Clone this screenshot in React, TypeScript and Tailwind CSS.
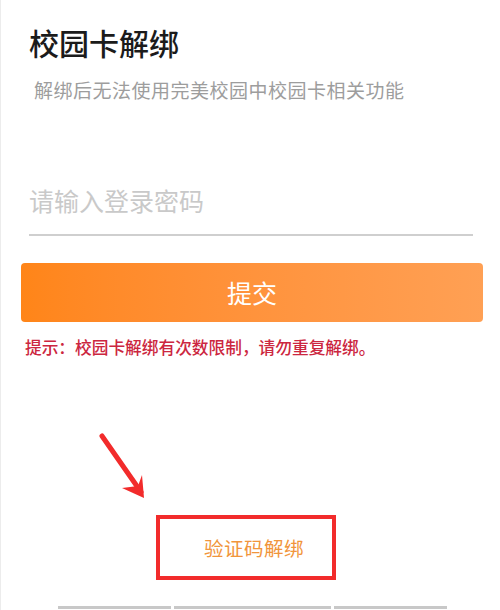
import React from 'react';

const font = { fontFamily: '"Noto Sans CJK SC", "Noto Sans", sans-serif' };

// red annotation arrow pointing at the link
const Arrow = () => (
  <svg className="absolute left-[90px] top-[428px]" width="70" height="80" viewBox="0 0 70 80">
    <path d="M11 8 L50 64" stroke="#f22b2b" strokeWidth="5" strokeLinecap="round" fill="none" />
    <path d="M53 70 L31 60 L47 58 L51 47 Z" fill="#f22b2b" />
  </svg>
);

export default function App() {
  return (
    <div className="relative w-[500px] h-[610px] overflow-hidden bg-white border-l border-[#ececec]" style={font}>
      <div className="flex flex-col px-7 pt-[22px]">
        <h1 className="text-[30px] leading-[40px] font-medium text-[#1b1b1b]">校园卡解绑</h1>
        <p className="mt-[14px] ml-[5px] text-[19px] leading-[28px] tracking-[0.5px] text-[#9d9d9d] whitespace-nowrap">
          解绑后无法使用完美校园中校园卡相关功能
        </p>
        <input
          type="password"
          placeholder="请输入登录密码"
          className="mt-[78px] mr-[-1px] h-[54px] pb-[16px] border-b-2 border-[#cfcfcf] bg-transparent text-[25px] outline-none placeholder:text-[#c9c9c9]"
        />
      </div>
      <div className="px-5 mt-[27px]">
        <button className="w-[462px] h-[59px] rounded-[4px] bg-gradient-to-r from-[#ff8518] to-[#ffa054] text-white text-[25px]">
          提交
        </button>
        <p className="mt-[13px] ml-[4px] text-[16.7px] leading-[24px] font-medium text-[#cc2640]">
          提示：校园卡解绑有次数限制，请勿重复解绑。
        </p>
      </div>
      <div className="mt-[156px] ml-[155px] w-[180px] h-[65px] border-[4px] border-[#f22b2b] flex items-center pl-[44px]">
        <span className="text-[19.5px] tracking-[0.5px] text-[#f1953b]">验证码解绑</span>
      </div>
      <div className="mt-[26px] ml-[57px] flex gap-[3px]">
        <div className="w-[113px] h-[3px] bg-[#c8c8c8]" />
        <div className="w-[157px] h-[3px] bg-[#c8c8c8]" />
        <div className="w-[113px] h-[3px] bg-[#c8c8c8]" />
      </div>
      <Arrow />
    </div>
  );
}
